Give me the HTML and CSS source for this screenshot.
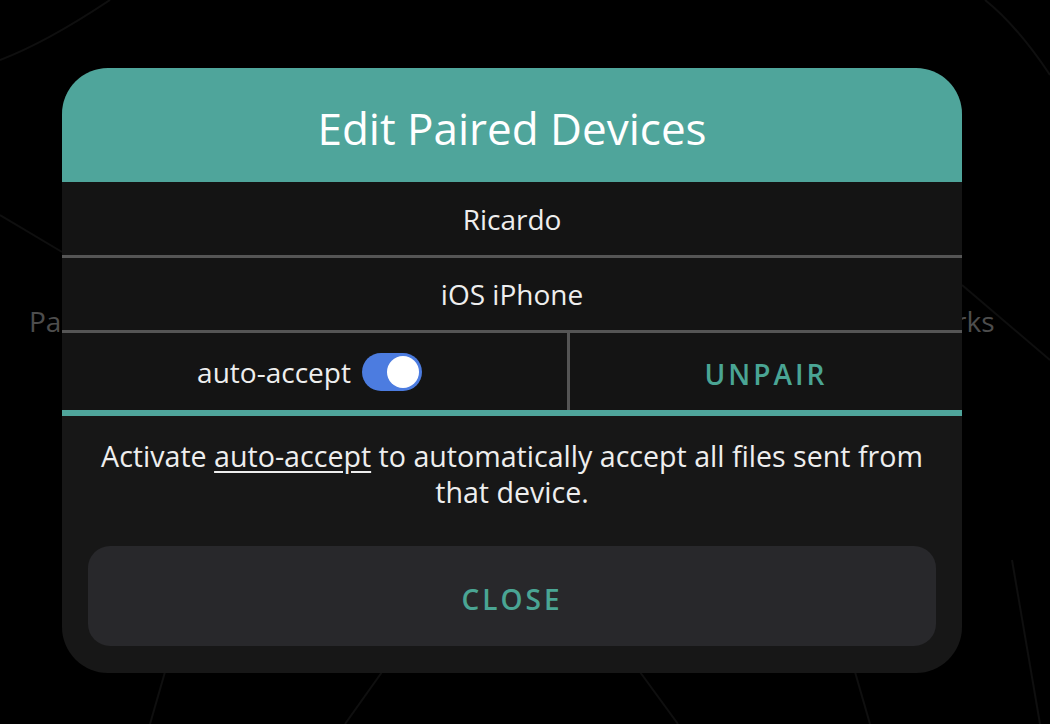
FILE: index.html
```html
<!DOCTYPE html>
<html lang="en">
<head>
    <meta charset="UTF-8">
    <meta name="viewport" content="width=device-width, initial-scale=1.0">
    <title>Edit Paired Devices</title>
    <link rel="stylesheet" href="styles.css">
</head>
<body>
    <div class="backdrop">
        <svg class="bg-lines" width="1050" height="724" viewBox="0 0 1050 724">
            <g stroke="#0f0f0f" stroke-width="2" fill="none">
                <path d="M0 215 L62 252"/>
                <path d="M165 672 L150 724"/>
                <path d="M382 672 L345 724"/>
                <path d="M640 672 L678 724"/>
                <path d="M855 672 L870 724"/>
                <path d="M962 285 L1050 360"/>
                <path d="M1012 560 L1040 724"/>
                <path d="M985 0 C1010 20 1030 45 1050 75"/>
                <path d="M110 0 C80 20 40 45 0 60"/>
            </g>
        </svg>
        <span class="bg-label bg-left">Pa</span>
        <span class="bg-label bg-right">rks</span>

        <div class="dialog">
            <div class="dialog-header">Edit Paired Devices</div>
            <div class="dialog-row">Ricardo</div>
            <div class="dialog-row">iOS iPhone</div>
            <div class="dialog-row split">
                <div class="cell">
                    <span>auto-accept</span>
                    <span class="toggle on"><span class="knob"></span></span>
                </div>
                <div class="cell">
                    <span class="action">UNPAIR</span>
                </div>
            </div>
            <p class="hint">Activate <u>auto-accept</u> to automatically accept all files sent from that device.</p>
            <button class="close-button">CLOSE</button>
        </div>
    </div>
</body>
</html>
```

FILE: styles.css
```css
body {
    margin: 0;
    padding: 0;
    background: #000;
    color: #eee;
    font-family: "Open Sans", "Noto Sans", sans-serif;
    overflow: hidden;
}

.backdrop {
    position: relative;
    inline-size: 1050px;
    block-size: 724px;
    padding-block-start: 68px;
    box-sizing: border-box;
}

.bg-lines {
    position: absolute;
    inset: 0;
}

.bg-label {
    position: absolute;
    inset-block-start: 302px;
    font-size: 28px;
    color: #4d4d4d;
}

.bg-left {
    inset-inline-start: 29px;
}

.bg-right {
    inset-inline-start: 955px;
}

.dialog {
    position: relative;
    inline-size: 900px;
    margin-inline-start: 62px;
    background: #171717;
    border-radius: 46px;
    overflow: hidden;
    display: flex;
    flex-direction: column;
    padding-block-end: 27px;
}

.dialog-header {
    block-size: 114px;
    padding-block-start: 6px;
    box-sizing: border-box;
    background: #4fa59b;
    color: #fff;
    font-size: 44px;
    display: flex;
    align-items: center;
    justify-content: center;
}

.dialog-row {
    block-size: 73px;
    background: #141414;
    border-block-end: 3px solid #555;
    display: flex;
    align-items: center;
    justify-content: center;
    font-size: 28px;
}

.dialog-row + .dialog-row {
    block-size: 72px;
}

.dialog-row.split {
    block-size: 77px;
    border-block-end: 6px solid #4fa59b;
    justify-content: stretch;
}

.cell {
    flex: 1;
    block-size: 100%;
    display: flex;
    align-items: center;
    justify-content: center;
    gap: 11px;
}

.cell:first-child {
    flex: 0 0 508px;
    border-inline-end: 3px solid #555;
    padding-inline-end: 10px;
    box-sizing: border-box;
}

.toggle {
    inline-size: 60px;
    block-size: 38px;
    border-radius: 19px;
    background: #4c7ce0;
    display: flex;
    align-items: center;
    justify-content: flex-end;
    padding: 3px;
    box-sizing: border-box;
}

.knob {
    inline-size: 32px;
    block-size: 32px;
    border-radius: 50%;
    background: #fff;
}

.action {
    color: #4aa594;
    font-weight: 600;
    font-size: 28px;
    letter-spacing: 3px;
    padding-block-start: 4px;
}

.hint {
    margin: 22px 34px 0;
    font-size: 28.6px;
    line-height: 36px;
    text-align: center;
}

.hint u {
    text-underline-offset: 4px;
}

.close-button {
    margin: 36px 26px 0;
    block-size: 100px;
    padding-block-start: 6px;
    border: none;
    border-radius: 22px;
    background: #28282b;
    color: #4aa594;
    font-family: inherit;
    font-weight: 600;
    font-size: 28px;
    letter-spacing: 3px;
    cursor: pointer;
}
```
